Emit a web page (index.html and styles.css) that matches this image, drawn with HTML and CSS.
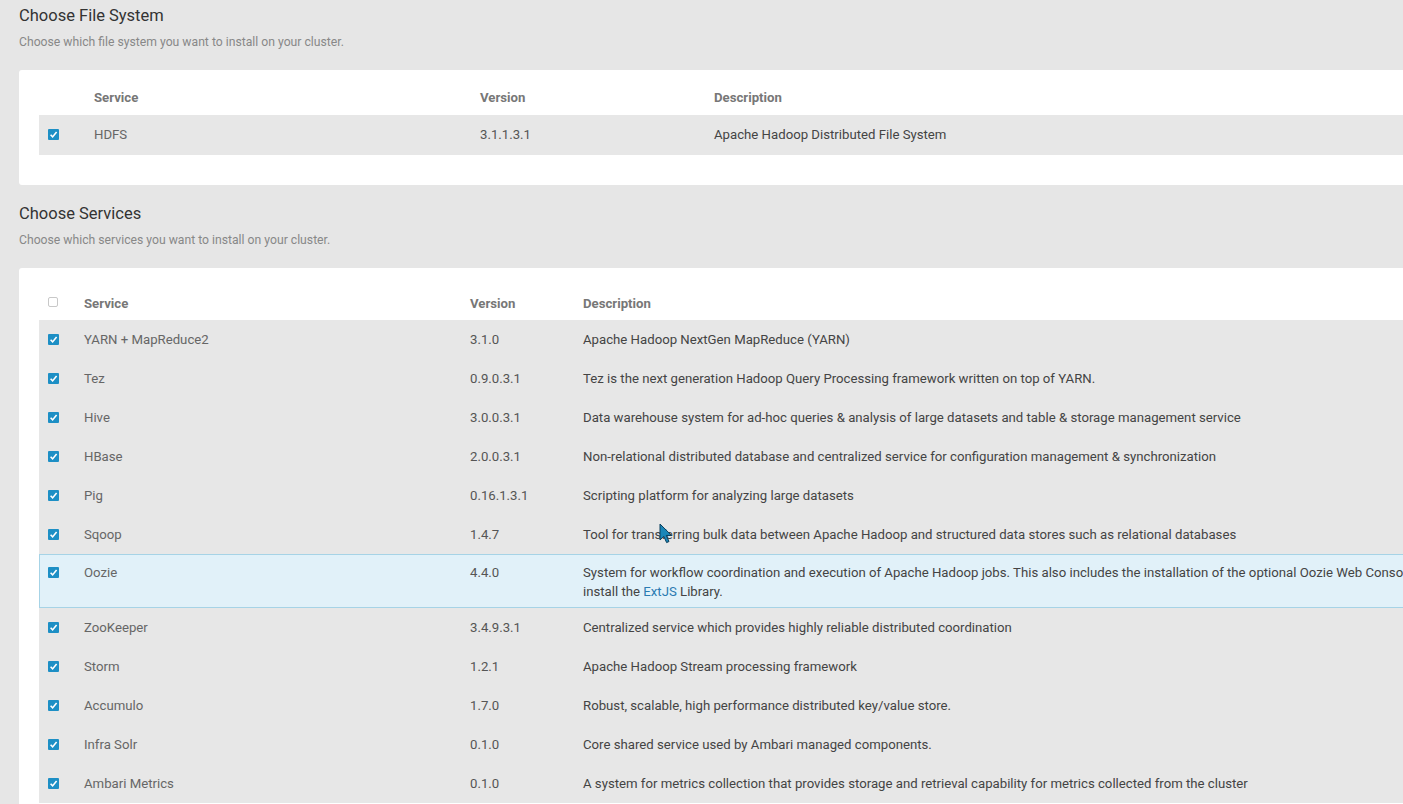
FILE: index.html
```html
<!DOCTYPE html>
<html>
<head>
<meta charset="utf-8">
<title>Choose Services</title>
<link rel="stylesheet" href="styles.css">
</head>
<body>
<div class="page">
  <section class="section">
    <h2 class="title">Choose File System</h2>
    <p class="subtitle">Choose which file system you want to install on your cluster.</p>
    <div class="card card-fs">
      <table class="grid grid-fs">
        <colgroup><col class="c1"><col class="c2"><col class="c3"><col class="c4"></colgroup>
        <thead>
          <tr><th></th><th>Service</th><th>Version</th><th>Description</th></tr>
        </thead>
        <tbody>
          <tr>
            <td class="cbcell"><span class="cb on"><svg viewBox="0 0 11 11"><path d="M2.6 5.8 L4.6 7.9 L8.6 2.9" fill="none" stroke="#fff" stroke-width="1.6"/></svg></span></td>
            <td class="name">HDFS</td><td class="ver">3.1.1.3.1</td><td class="desc">Apache Hadoop Distributed File System</td>
          </tr>
        </tbody>
      </table>
    </div>
  </section>

  <section class="section">
    <h2 class="title">Choose Services</h2>
    <p class="subtitle">Choose which services you want to install on your cluster.</p>
    <div class="card card-svc">
      <table class="grid grid-svc">
        <colgroup><col class="c1"><col class="c2"><col class="c3"><col class="c4"></colgroup>
        <thead>
          <tr><th class="cbcell"><span class="cb off"></span></th><th>Service</th><th>Version</th><th>Description</th></tr>
        </thead>
        <tbody>
          <tr><td class="cbcell"><span class="cb on"><svg viewBox="0 0 11 11"><path d="M2.6 5.8 L4.6 7.9 L8.6 2.9" fill="none" stroke="#fff" stroke-width="1.6"/></svg></span></td><td class="name">YARN + MapReduce2</td><td class="ver">3.1.0</td><td class="desc">Apache Hadoop NextGen MapReduce (YARN)</td></tr>
          <tr><td class="cbcell"><span class="cb on"><svg viewBox="0 0 11 11"><path d="M2.6 5.8 L4.6 7.9 L8.6 2.9" fill="none" stroke="#fff" stroke-width="1.6"/></svg></span></td><td class="name">Tez</td><td class="ver">0.9.0.3.1</td><td class="desc">Tez is the next generation Hadoop Query Processing framework written on top of YARN.</td></tr>
          <tr><td class="cbcell"><span class="cb on"><svg viewBox="0 0 11 11"><path d="M2.6 5.8 L4.6 7.9 L8.6 2.9" fill="none" stroke="#fff" stroke-width="1.6"/></svg></span></td><td class="name">Hive</td><td class="ver">3.0.0.3.1</td><td class="desc">Data warehouse system for ad-hoc queries &amp; analysis of large datasets and table &amp; storage management service</td></tr>
          <tr><td class="cbcell"><span class="cb on"><svg viewBox="0 0 11 11"><path d="M2.6 5.8 L4.6 7.9 L8.6 2.9" fill="none" stroke="#fff" stroke-width="1.6"/></svg></span></td><td class="name">HBase</td><td class="ver">2.0.0.3.1</td><td class="desc">Non-relational distributed database and centralized service for configuration management &amp; synchronization</td></tr>
          <tr><td class="cbcell"><span class="cb on"><svg viewBox="0 0 11 11"><path d="M2.6 5.8 L4.6 7.9 L8.6 2.9" fill="none" stroke="#fff" stroke-width="1.6"/></svg></span></td><td class="name">Pig</td><td class="ver">0.16.1.3.1</td><td class="desc">Scripting platform for analyzing large datasets</td></tr>
          <tr><td class="cbcell"><span class="cb on"><svg viewBox="0 0 11 11"><path d="M2.6 5.8 L4.6 7.9 L8.6 2.9" fill="none" stroke="#fff" stroke-width="1.6"/></svg></span></td><td class="name">Sqoop</td><td class="ver">1.4.7</td><td class="desc">Tool for transferring bulk data between Apache Hadoop and structured data stores such as relational databases</td></tr>
          <tr class="active"><td class="cbcell"><span class="cb on"><svg viewBox="0 0 11 11"><path d="M2.6 5.8 L4.6 7.9 L8.6 2.9" fill="none" stroke="#fff" stroke-width="1.6"/></svg></span></td><td class="name">Oozie</td><td class="ver">4.4.0</td><td class="desc">System for workflow coordination and execution of Apache Hadoop jobs. This also includes the installation of the optional Oozie Web Console which relies on and will install the <a class="link" href="#">ExtJS</a> Library.</td></tr>
          <tr><td class="cbcell"><span class="cb on"><svg viewBox="0 0 11 11"><path d="M2.6 5.8 L4.6 7.9 L8.6 2.9" fill="none" stroke="#fff" stroke-width="1.6"/></svg></span></td><td class="name">ZooKeeper</td><td class="ver">3.4.9.3.1</td><td class="desc">Centralized service which provides highly reliable distributed coordination</td></tr>
          <tr><td class="cbcell"><span class="cb on"><svg viewBox="0 0 11 11"><path d="M2.6 5.8 L4.6 7.9 L8.6 2.9" fill="none" stroke="#fff" stroke-width="1.6"/></svg></span></td><td class="name">Storm</td><td class="ver">1.2.1</td><td class="desc">Apache Hadoop Stream processing framework</td></tr>
          <tr><td class="cbcell"><span class="cb on"><svg viewBox="0 0 11 11"><path d="M2.6 5.8 L4.6 7.9 L8.6 2.9" fill="none" stroke="#fff" stroke-width="1.6"/></svg></span></td><td class="name">Accumulo</td><td class="ver">1.7.0</td><td class="desc">Robust, scalable, high performance distributed key/value store.</td></tr>
          <tr><td class="cbcell"><span class="cb on"><svg viewBox="0 0 11 11"><path d="M2.6 5.8 L4.6 7.9 L8.6 2.9" fill="none" stroke="#fff" stroke-width="1.6"/></svg></span></td><td class="name">Infra Solr</td><td class="ver">0.1.0</td><td class="desc">Core shared service used by Ambari managed components.</td></tr>
          <tr><td class="cbcell"><span class="cb on"><svg viewBox="0 0 11 11"><path d="M2.6 5.8 L4.6 7.9 L8.6 2.9" fill="none" stroke="#fff" stroke-width="1.6"/></svg></span></td><td class="name">Ambari Metrics</td><td class="ver">0.1.0</td><td class="desc">A system for metrics collection that provides storage and retrieval capability for metrics collected from the cluster</td></tr>
        </tbody>
      </table>
    </div>
  </section>
</div>
<svg class="cursor" viewBox="0 0 14 21" width="14" height="21"><path d="M1 1 L1 17 L4.8 13.4 L7.6 19.6 L10 18.5 L7.3 12.4 L12.5 12.4 Z" fill="#1a86b8" stroke="#0b3f5c" stroke-width="1"/></svg>
</body>
</html>
```
FILE: styles.css
```css
html, body {
  margin: 0;
  padding: 0;
  overflow: hidden;
  height: 100%;
}
body {
  background: #e6e6e6;
  font-family: Roboto, "Liberation Sans", Arial, sans-serif;
  color: #444;
  position: relative;
}
.page {
  padding-left: 19px;
  padding-top: 5px;
}
.section + .section {
  margin-top: 18px;
}
.title {
  margin: 0;
  font-size: 16.5px;
  line-height: 22px;
  font-weight: 400;
  color: #333;
}
.subtitle {
  margin: 7px 0 0;
  font-size: 12.2px;
  line-height: 16px;
  color: #888;
}
.card {
  margin-top: 20px;
  background: #fff;
  border-radius: 3px;
  width: 1590px;
  padding: 10px 20px 30px;
  box-sizing: border-box;
}
.grid {
  width: 100%;
  border-collapse: collapse;
  table-layout: fixed;
  font-size: 13.2px;
}
.grid th {
  text-align: left;
  font-weight: 700;
  color: #777;
  line-height: 19px;
  padding: 8px 0;
  vertical-align: top;
}
.grid-svc th {
  padding: 16px 0 7px;
}
.grid td {
  line-height: 19px;
  padding: 10px 0;
  vertical-align: top;
}
.grid-fs td {
  padding-bottom: 11px;
}
.grid tbody tr {
  background: #e7e7e7;
}
.grid-fs .c1 { width: 55px; }
.grid-fs .c2 { width: 386px; }
.grid-fs .c3 { width: 234px; }
.grid-svc .c1 { width: 45px; }
.grid-svc .c2 { width: 386px; }
.grid-svc .c3 { width: 113px; }
.grid .desc {
  padding-right: 10px;
  color: #444;
}
.grid .name { color: #666; }
.grid .ver { color: #555; }
.grid tr.active {
  background: #e1f1f9;
  outline: 1px solid #a6d3e6;
  outline-offset: -1px;
}
.grid tr.active td {
  padding: 9px 0 7px;
}
.grid tr.active td.desc { padding-right: 10px; }
.cbcell {
  padding-left: 9px !important;
}
.cb {
  display: block;
  width: 11px;
  height: 11px;
  margin-top: 4px;
  box-sizing: border-box;
  border-radius: 1px;
}
.cb svg { display: block; width: 11px; height: 11px; }
.cb.on { background: #1d8fc5; }
.cb.off {
  width: 10px;
  height: 10px;
  margin-top: 3px;
  border: 1px solid #c8c8c8;
  border-radius: 2px;
  background: #fff;
}
.link {
  color: #2a7bb2;
  text-decoration: none;
}
.cursor {
  position: absolute;
  left: 659px;
  top: 523px;
}
```
